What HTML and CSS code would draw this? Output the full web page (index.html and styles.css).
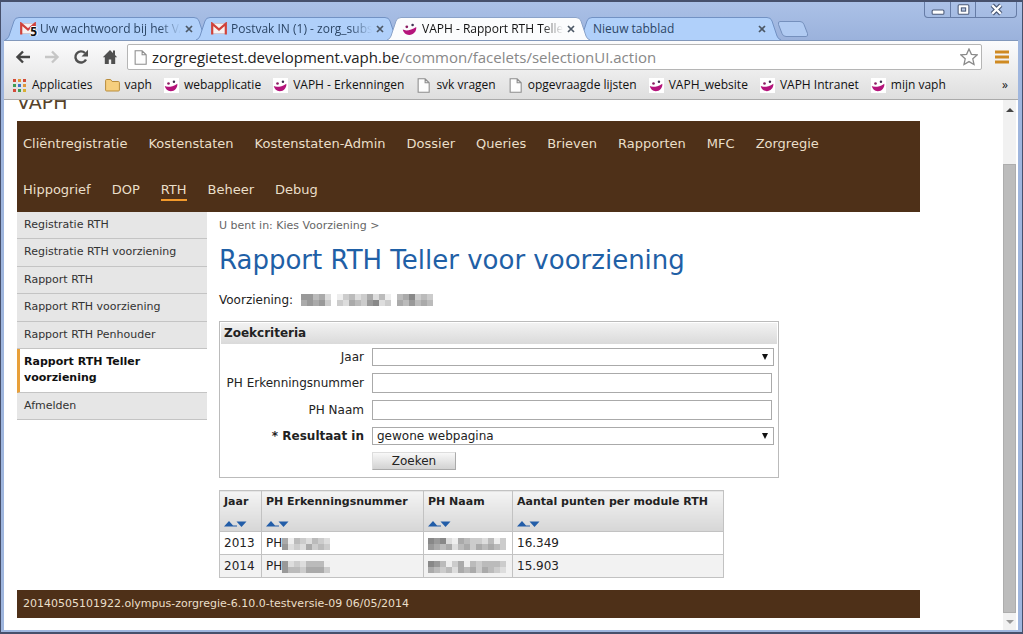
FILE: index.html
```html
<!DOCTYPE html>
<html lang="nl">
<head>
<meta charset="utf-8">
<title>VAPH - Rapport RTH Teller</title>
<link rel="stylesheet" href="styles.css">
</head>
<body>
<svg class="defs" aria-hidden="true">
  <symbol id="tab-shape" viewBox="0 0 203 23" preserveAspectRatio="none"><path d="M0 23 Q3 22 4 19 L9 4 Q10 .5 14 .5 H189 Q193 .5 194 4 L199 19 Q200 22 203 23"/></symbol>
  <symbol id="gmail" viewBox="0 0 16 12"><path d="M1 1h14v10H1z" fill="#f6f2f2" stroke="#d0b4b4" stroke-width=".6"/><path d="M1.2 12V1.2L8 7l6.800-5.800V12" fill="none" stroke="#d0423b" stroke-width="2.200"/></symbol>
  <symbol id="smile" viewBox="0 0 16 16"><path d="M.8 8.600c2.800 1.600 8.400.8 13.400-2.600.6 4.200-2.700 8-7 8C3.800 14 1.500 11.800.8 8.600z" fill="#b5147b"/><circle cx="4.800" cy="5.800" r="1.400" fill="#8c1c62"/><circle cx="10.600" cy="4" r="1.300" fill="#403050"/></symbol>
  <symbol id="page" viewBox="0 0 12 14"><path d="M1 .7h6.500L11.300 4.500v8.800H1zM7.500 .7v3.800h3.800" fill="#fdfdfd" stroke="#8d8d8d"/></symbol>
  <symbol id="close" viewBox="0 0 8 8"><path d="M1 1l6 6M7 1L1 7" stroke="#4c5866" stroke-width="1.700"/></symbol>
  <symbol id="sort" viewBox="0 0 23 6"><path d="M0 5.500L5 0l4 4.500h4v1zM12.500 0.500h10L17.500 6z" fill="#225da8"/></symbol>
</svg>
<div class="window">
  <header class="tabstrip">
    <div class="tabs">
      <div class="tab"><svg class="shape"><use href="#tab-shape"/></svg><span class="mail"><svg class="fav"><use href="#gmail"/></svg><b>5</b></span><span class="tab-title">Uw wachtwoord bij het VA</span><button class="close" aria-label="Sluiten"><svg><use href="#close"/></svg></button></div>
      <div class="tab"><svg class="shape"><use href="#tab-shape"/></svg><svg class="fav"><use href="#gmail"/></svg><span class="tab-title">Postvak IN (1) - zorg_subs</span><button class="close" aria-label="Sluiten"><svg><use href="#close"/></svg></button></div>
      <div class="tab active"><svg class="shape"><use href="#tab-shape"/></svg><svg class="fav"><use href="#smile"/></svg><span class="tab-title">VAPH - Rapport RTH Telle</span><button class="close" aria-label="Sluiten"><svg><use href="#close"/></svg></button></div>
      <div class="tab"><svg class="shape"><use href="#tab-shape"/></svg><span class="tab-title">Nieuw tabblad</span><button class="close" aria-label="Sluiten"><svg><use href="#close"/></svg></button></div>
      <button class="newtab" aria-label="Nieuw tabblad openen"><svg viewBox="0 0 32 16"><path d="M3 .5h20q3 0 4 3l3.500 9q.8 3-1.500 3H9q-3 0-4-3L1.500 3.500Q.8.5 3 .5z" fill="#b1cbf2" stroke="#7590bd"/></svg></button>
    </div>
    <div class="controls">
      <button aria-label="Minimaliseren"><svg viewBox="0 0 14 12"><rect x="2" y="6.500" width="11" height="4" rx="1" fill="#fff" stroke="#4b5a78"/></svg></button>
      <button aria-label="Maximaliseren"><svg viewBox="0 0 14 12"><rect x="2" y="1.500" width="10" height="9" rx="1" fill="#fff" stroke="#4b5a78"/><rect x="5" y="4.500" width="4" height="3" fill="#b9c9e6" stroke="#4b5a78"/></svg></button>
      <button class="wide" aria-label="Venster sluiten"><svg viewBox="0 0 14 12"><path d="M3 2l8 8M11 2l-8 8" stroke="#4b5a78" stroke-width="4.200"/><path d="M3 2l8 8M11 2l-8 8" stroke="#fff" stroke-width="2.200"/></svg></button>
    </div>
  </header>
  <div class="toolbar">
    <button aria-label="Terug"><svg viewBox="0 0 16 16"><path d="M15 8H3M8 2.500L2.500 8 8 13.500" fill="none" stroke="#444" stroke-width="2.400"/></svg></button>
    <button aria-label="Vooruit"><svg viewBox="0 0 16 16"><path d="M1 8h12M8 2.500L13.500 8 8 13.500" fill="none" stroke="#c6c6c6" stroke-width="2.400"/></svg></button>
    <button aria-label="Vernieuwen"><svg viewBox="0 0 16 16"><path d="M13 10.500A5.600 5.600 0 1 1 12 4" fill="none" stroke="#505050" stroke-width="2.400"/><path d="M15 .8v6.700H8.500z" fill="#505050"/></svg></button>
    <button aria-label="Startpagina"><svg viewBox="0 0 16 16"><path d="M8 1L.8 8.200h2V15h4v-4.500h2.400V15h4V8.200h2L13 6V1.500h-2V4z" fill="#505050"/></svg></button>
    <div class="address"><svg class="doc"><use href="#page"/></svg><span class="url"><b>zorgregietest.development.vaph.be</b>/common/facelets/selectionUI.action</span><svg class="star" viewBox="0 0 18 18"><path d="M9 1l2.400 5.300 5.700.6-4.300 3.900 1.200 5.700L9 13.600l-5 2.900 1.200-5.700L.9 6.900l5.700-.6z" fill="#fff" stroke="#8a8a8a" stroke-width="1.300"/></svg></div>
    <button class="menu" aria-label="Menu"><svg viewBox="0 0 14 14"><path d="M0 2h14M0 7h14M0 12h14" stroke="#cf8a22" stroke-width="3"/></svg></button>
  </div>
  <nav class="bookmarks" aria-label="Bladwijzers">
    <a href="#"><svg viewBox="0 0 15 15"><path d="M1 1h3v3H1zM1 11h3v3H1zM11 1h3v3h-3z" fill="#d44b38"/><path d="M6 1h3v3H6zM11 6h3v3h-3z" fill="#e0973a"/><path d="M1 6h3v3H1zM6 11h3v3H6z" fill="#3f9e55"/><path d="M6 6h3v3H6z" fill="#3d74cc"/><path d="M11 11h3v3h-3z" fill="#d9ae32"/></svg>Applicaties</a>
    <a href="#"><svg viewBox="0 0 15 15"><path d="M.6 4V2.500q0-1 1-1h4l1.500 2h6.300q1 0 1 1v7.500q0 1-1 1H1.600q-1 0-1-1z" fill="#f6cf7e" stroke="#b98d3c"/></svg>vaph</a>
    <a href="#"><svg class="vaph"><use href="#smile"/></svg>webapplicatie</a>
    <a href="#"><svg class="vaph"><use href="#smile"/></svg>VAPH - Erkenningen</a>
    <a href="#"><svg><use href="#page"/></svg>svk vragen</a>
    <a href="#"><svg><use href="#page"/></svg>opgevraagde lijsten</a>
    <a href="#"><svg class="vaph"><use href="#smile"/></svg>VAPH_website</a>
    <a href="#"><svg class="vaph"><use href="#smile"/></svg>VAPH Intranet</a>
    <a href="#"><svg class="vaph"><use href="#smile"/></svg>mijn vaph</a>
    <button aria-label="Meer bladwijzers">»</button>
  </nav>
  <div class="viewport">
    <div class="page">
      <div class="brand"><span>VAPH</span></div>
      <nav class="mainnav" aria-label="Hoofdmenu">
        <a href="#">Cliëntregistratie</a><a href="#">Kostenstaten</a><a href="#">Kostenstaten-Admin</a><a href="#">Dossier</a><a href="#">Queries</a><a href="#">Brieven</a><a href="#">Rapporten</a><a href="#">MFC</a><a href="#">Zorgregie</a><a href="#">Hippogrief</a><a href="#">DOP</a><a href="#" class="current">RTH</a><a href="#">Beheer</a><a href="#">Debug</a>
      </nav>
      <div class="columns">
        <nav class="side" aria-label="Submenu">
          <a href="#">Registratie RTH</a>
          <a href="#">Registratie RTH voorziening</a>
          <a href="#">Rapport RTH</a>
          <a href="#">Rapport RTH voorziening</a>
          <a href="#">Rapport RTH Penhouder</a>
          <a href="#" class="current">Rapport RTH Teller voorziening</a>
          <a href="#">Afmelden</a>
        </nav>
        <main>
          <p class="crumbs">U bent in: Kies Voorziening &gt;</p>
          <h1>Rapport RTH Teller voor voorziening</h1>
          <p class="facility">Voorziening: <svg class="mosaic" data-cells="6645201342352410457343|5656303254367230546454" data-cell="6"></svg></p>
          <form class="criteria">
            <h2>Zoekcriteria</h2>
            <div class="fields">
              <label for="jaar">Jaar</label>
              <div class="pick"><select id="jaar"><option></option></select></div>
              <label for="erk">PH Erkenningsnummer</label>
              <input id="erk" type="text">
              <label for="naam">PH Naam</label>
              <input id="naam" type="text">
              <label for="res" class="required">* Resultaat in</label>
              <div class="pick"><select id="res"><option>gewone webpagina</option></select></div>
              <button type="button">Zoeken</button>
            </div>
          </form>
          <table>
            <colgroup><col class="c-year"><col class="c-num"><col class="c-name"><col class="c-points"></colgroup>
            <thead><tr>
              <th>Jaar<svg class="sort"><use href="#sort"/></svg></th>
              <th>PH Erkenningsnummer<svg class="sort"><use href="#sort"/></svg></th>
              <th>PH Naam<svg class="sort"><use href="#sort"/></svg></th>
              <th>Aantal punten per module RTH<svg class="sort"><use href="#sort"/></svg></th>
            </tr></thead>
            <tbody>
              <tr><td>2013</td><td>PH<svg class="mosaic" data-cells="51432432|62325343" data-cell="6"></svg></td><td><svg class="mosaic" data-cells="7672154332413|6545245354543" data-cell="6"></svg></td><td>16.349</td></tr>
              <tr><td>2014</td><td>PH<svg class="mosaic" data-cells="62324441|64435553" data-cell="6"></svg></td><td><svg class="mosaic" data-cells="7641351434443|5434254535432" data-cell="6"></svg></td><td>15.903</td></tr>
            </tbody>
          </table>
        </main>
      </div>
      <footer>20140505101922.olympus-zorgregie-6.10.0-testversie-09 06/05/2014</footer>
    </div>
    <div class="scrollbar"><svg viewBox="0 0 13 20"><path d="M3 12h8L7 8z" fill="#444"/></svg><div class="track"><div class="thumb"></div></div><svg viewBox="0 0 13 17"><path d="M3 7h8l-4 4z" fill="#999"/></svg></div>
  </div>
</div>
<script src="mosaic.js"></script>
</body>
</html>
```
FILE: styles.css
```css
* { box-sizing: border-box; }
body { margin: 0; font: 12px/16px "DejaVu Sans", Verdana, sans-serif; color: #222; }
a { color: inherit; text-decoration: none; }
button { border: 0; padding: 0; background: none; font: inherit; color: inherit; }
svg { display: block; flex: none; }
.defs { position: absolute; width: 0; height: 0; }

.window {
  display: flex; flex-direction: column; height: 100vh;
  border: solid #46506c; border-width: 2px 1px;
  padding: 0 4px 2px 3px; background: #9fb6de; overflow: hidden;
}

.tabstrip { display: flex; justify-content: space-between; height: 38px; flex: none; margin: 0 -4px 0 -3px; background: linear-gradient(#abc1e7, #9bb2dc); font: 12px/16px "Open Sans", "Noto Sans", sans-serif; }
.tabs { display: flex; align-items: flex-end; padding-left: 4px; flex: 1; min-width: 0; }
.tab { position: relative; display: flex; align-items: center; flex: 0 1 203px; height: 23px; margin-right: -12px; padding: 0 15px; color: #2c4666; min-width: 0; isolation: isolate; }
.tab.active { z-index: 1; color: #111; }
.shape { position: absolute; inset: 0; width: 100%; height: 100%; z-index: -1; fill: #b0d0fa; stroke: #7292c4; }
.active .shape { fill: #fbfcfd; stroke: #8ba3c9; }
.fav { width: 16px; height: 13px; margin-right: 4px; }
.active .fav { height: 16px; }
.mail { position: relative; }
.mail b { position: absolute; right: 3px; top: 3px; font-size: 12px; line-height: 14px; color: #111; text-shadow: 1px 0 #fff, -1px 0 #fff, 0 -1px #fff; }
.tab-title { flex: 1; min-width: 0; overflow: hidden; white-space: nowrap; mask-image: linear-gradient(to right, #000 85%, transparent); }
.tab:nth-child(4) .tab-title { mask-image: none; }
.close { margin-left: 4px; }
.close svg { width: 8px; height: 8px; }
.newtab { margin: 0 0 3px 8px; }
.newtab svg { width: 32px; height: 16px; }
.controls { display: flex; height: 16px; margin-right: 5px; border: 1px solid #667ca6; border-top: 0; border-radius: 0 0 4px 4px; }
.controls button { width: 25px; display: grid; place-items: center; }
.controls button + button { border-left: 1px solid #667ca6; }
.controls .wide { width: 41px; }
.controls svg { width: 15px; height: 13px; }

.toolbar { display: flex; align-items: center; gap: 13px; flex: none; height: 33px; padding: 0 9px 0 11px; background: linear-gradient(#fbfbfc, #ececec); border-top: 1px solid #8298bb; }
.toolbar button svg { width: 16px; height: 16px; }
.address { display: flex; align-items: center; flex: 1; min-width: 0; height: 26px; margin-left: -4px; padding: 0 3px 0 6px; background: #fff; border: 1px solid #b5b5b5; border-radius: 2px; }
.doc { width: 13px; height: 15px; margin-right: 5px; }
.url { flex: 1; min-width: 0; overflow: hidden; white-space: nowrap; font: 15px/20px "Open Sans", "Noto Sans", sans-serif; color: #888; }
.url b { font-weight: 400; color: #222; }
.star { width: 18px; height: 18px; }
.toolbar .menu svg { width: 14px; height: 14px; }

.bookmarks { display: flex; align-items: center; gap: 12px; flex: none; height: 27px; padding: 0 10px 2px 8px; background: linear-gradient(#ececec, #dedede); border-bottom: 1px solid #aaa; font: 12px/16px "Open Sans", "Noto Sans", sans-serif; color: #111; white-space: nowrap; }
.bookmarks a { display: flex; align-items: center; gap: 5px; }
.bookmarks svg { width: 15px; height: 15px; }
.bookmarks .vaph { background: #fff; }
.bookmarks button { margin-left: auto; }

.viewport { display: flex; flex: 1; min-height: 0; padding-right: 2px; background: #fff; overflow: hidden; }
.page { flex: 1; min-width: 0; margin: 0 83px 0 13px; }
.brand { height: 21px; overflow: hidden; font-size: 19px; line-height: 20px; color: #56422a; }
.brand span { display: block; margin-top: -8px; }
.mainnav { display: flex; flex-wrap: wrap; row-gap: 1px; padding-left: 6px; background: #4e3018; color: #eadfc9; font-size: 13px; line-height: 17px; }
.mainnav a { margin: 14px 21px 11px 0; padding-bottom: 1px; border-bottom: 2px solid transparent; }
.mainnav .current { border-color: #f39a2c; }
.columns { display: flex; gap: 12px; align-items: flex-start; }
.side { display: flex; flex-direction: column; flex: 0 0 190px; min-height: 208px; font-size: 11px; color: #333; }
.side a { flex: 1 0 auto; padding: 5px 7px; background: #e6e6e6; border-bottom: 1px solid #c4c4c4; }
.side .current { padding-left: 4px; border-left: 3px solid #e8a03a; background: #fff; color: #111; font-weight: 700; }

main { flex: 1; min-width: 0; }
.crumbs { margin: 6px 0 0; font-size: 11px; color: #666; }
h1 { margin: 10px 0 0; font-size: 26px; line-height: 32px; font-weight: 400; color: #1f60a6; }
.facility { display: flex; align-items: center; gap: 8px; margin: 16px 0 13px; }
.criteria { max-width: 560px; padding: 1px; border: 1px solid #bbb; }
h2 { margin: 0; padding: 2px 3px; font-size: 12px; line-height: 17px; background: linear-gradient(#f2f2f2, #dadada); }
.fields { display: grid; grid-template-columns: 143px 1fr; column-gap: 8px; row-gap: 7px; align-items: center; padding: 4px 3px 6px 0; }
.fields label { text-align: right; white-space: nowrap; }
.required { font-weight: 700; }
.fields input, .fields select { display: block; width: 100%; background: #fff; border: 1px solid #aaa; border-radius: 0; padding: 0 4px; font: inherit; color: #222; }
.fields input { height: 20px; width: calc(100% - 2px); }
.fields select { height: 18px; appearance: none; }
.pick { position: relative; }
.pick::after { content: ""; position: absolute; right: 6px; top: 6px; border: solid transparent; border-width: 6px 3px 0; border-top-color: #111; pointer-events: none; }
.fields button { grid-column: 2; width: 84px; height: 18px; border: 1px solid #aaa; border-top-color: #ddd; border-left-color: #ddd; background: linear-gradient(#f8f8f8, #d2d2d2); }

table { margin-top: 12px; border-collapse: collapse; table-layout: fixed; width: 504px; }
.c-year { width: 42px; } .c-num { width: 162px; } .c-name { width: 89px; } .c-points { width: 211px; }
th, td { border: 1px solid #c2c2c2; padding: 3px 0 3px 4px; text-align: left; white-space: nowrap; }
th { background: linear-gradient(#f4f4f4, #d6d6d6); font-size: 11px; }
.sort { width: 23px; height: 6px; margin: 11px 0 1px; }
tbody tr:nth-child(2) { background: #f2f2f2; }
td .mosaic { display: inline-block; vertical-align: middle; }
footer { margin-top: 12px; padding: 6px; background: #4e3018; color: #eadfc9; font-size: 11px; }

.scrollbar { display: flex; flex-direction: column; width: 13px; background: #f1f1f1; }
.track { display: flex; flex-direction: column; justify-content: flex-end; flex: 1; min-height: 0; }
.thumb { height: 91%; background: #bcbcbc; border: 1px solid #adadad; }
```
FILE: mosaic.js
```js
document.querySelectorAll(".mosaic").forEach(function (svg) {
  var rows = svg.dataset.cells.split("|"), s = +svg.dataset.cell;
  svg.setAttribute("width", rows[0].length * s);
  svg.setAttribute("height", rows.length * s);
  rows.forEach(function (row, y) {
    row.split("").forEach(function (v, x) {
      var r = document.createElementNS("http://www.w3.org/2000/svg", "rect"), g = 255 - v * 17;
      r.setAttribute("x", x * s); r.setAttribute("y", y * s);
      r.setAttribute("width", s); r.setAttribute("height", s);
      r.setAttribute("fill", "rgb(" + g + "," + g + "," + g + ")");
      svg.appendChild(r);
    });
  });
});
```
